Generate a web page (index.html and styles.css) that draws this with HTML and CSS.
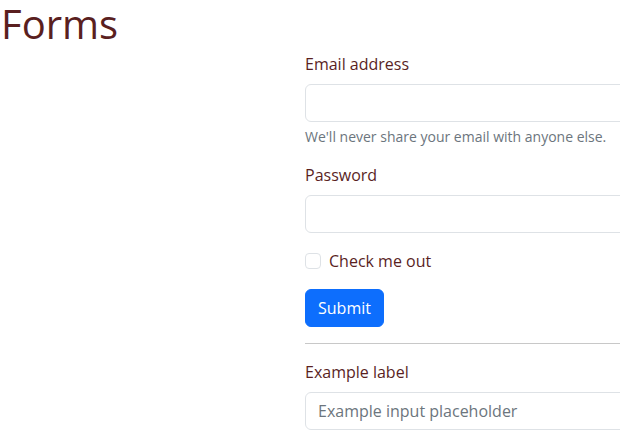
FILE: index.html
```html
<!DOCTYPE html>
<html lang="en">
<head>
<meta charset="utf-8">
<title>Forms</title>
<link rel="stylesheet" href="styles.css">
</head>
<body>
<h1 class="title">Forms</h1>
<div class="layout">
  <div class="spacer"></div>
  <form class="form">
    <div class="field">
      <label class="label" for="email">Email address</label>
      <input class="input" id="email" type="email">
      <div class="help">We'll never share your email with anyone else.</div>
    </div>
    <div class="field">
      <label class="label" for="pw">Password</label>
      <input class="input" id="pw" type="password">
    </div>
    <div class="field check">
      <input class="checkbox" id="chk" type="checkbox">
      <label class="check-label" for="chk">Check me out</label>
    </div>
    <button class="btn" type="button">Submit</button>
    <hr class="rule">
    <div class="field">
      <label class="label" for="ex">Example label</label>
      <input class="input" id="ex" type="text" placeholder="Example input placeholder">
    </div>
  </form>
</div>
</body>
</html>
```
FILE: styles.css
```css
html { overflow: hidden; }
body {
  margin: 0;
  font-family: "Open Sans", "Noto Sans", sans-serif;
  font-size: 16px;
  line-height: 1.5;
  color: #5a1f1f;
  background: #fff;
}
.title {
  margin: 0 0 4px 0;
  padding-left: 1px;
  font-size: 40px;
  font-weight: 400;
  line-height: 48px;
  color: #5a1f1f;
}
.layout {
  display: grid;
  grid-template-columns: 305px 500px;
}
.form { display: flex; flex-direction: column; align-items: flex-start; }
.field { width: 100%; margin-bottom: 16px; }
.label { display: block; margin-bottom: 8px; }
.input {
  display: block;
  box-sizing: border-box;
  width: 100%;
  height: 38px;
  padding: 6px 12px;
  font: inherit;
  color: #212529;
  border: 1px solid #dee2e6;
  border-radius: 6px;
  background: #fff;
  outline: none;
}
.input::placeholder { color: #6c757d; }
.help {
  margin-top: 4px;
  font-size: 14px;
  line-height: 21px;
  color: #6c757d;
}
.check { display: flex; align-items: center; gap: 8px; height: 24px; }
.checkbox {
  appearance: none;
  margin: 0;
  width: 16px;
  height: 16px;
  border: 1px solid #dee2e6;
  border-radius: 4px;
  background: #fff;
}
.btn {
  height: 38px;
  padding: 6px 12px;
  font: inherit;
  color: #fff;
  background: #0d6efd;
  border: 1px solid #0d6efd;
  border-radius: 6px;
}
.rule {
  align-self: stretch;
  margin: 16px 0;
  border: 0;
  border-top: 1px solid #c8c8c8;
  height: 0;
}
```
